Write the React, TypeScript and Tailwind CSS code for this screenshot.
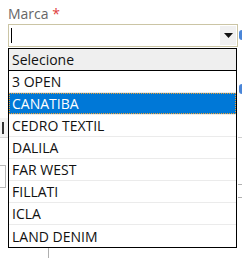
import React from "react";

const items = ["3 OPEN", "CANATIBA", "CEDRO TEXTIL", "DALILA", "FAR WEST", "FILLATI", "ICLA", "LAND DENIM"];

function Row({ label, selected, last }: { label: string; selected?: boolean; last?: boolean }) {
  if (selected) {
    return (
      <div className="h-[22px] border-b border-[#ebebeb] flex">
        <div className="flex-1 bg-[#0078d7] text-white border border-dotted border-[#f0a030] flex items-center pl-[2px]">
          {label}
        </div>
      </div>
    );
  }
  return (
    <div className={`h-[22px] flex items-center pl-[3px] ${last ? "" : "border-b border-[#ebebeb]"}`}>
      {label}
    </div>
  );
}

export default function App() {
  return (
    <div
      className="w-[242px] h-[258px] overflow-hidden bg-white flex"
      style={{ fontFamily: '"Open Sans", "Noto Sans", "DejaVu Sans", sans-serif' }}
    >
      {/* left gutter: fragments of the page behind the list */}
      <div className="w-[8px] shrink-0 flex flex-col">
        <div className="mt-[118px] h-[20px] border-b border-[#d8d8d8] bg-[#f4f4f4] flex items-center pl-[2px]">
          <div className="w-[2px] h-[12px] bg-[#333]" />
        </div>
        <div className="mt-[27px] w-[6px] h-[23px] border border-l-0 border-[#b8b8b8]" />
      </div>

      {/* field */}
      <div className="w-[230px] shrink-0 flex flex-col">
        <div className="pt-[4px] text-[14px] leading-[19px] text-[#666]">
          Marca <span className="text-[#e03c3c]">*</span>
        </div>

        <div className="mt-[1px] h-[23px] border border-[#cbc5a5] bg-white flex items-center">
          <div className="ml-[2px] w-[1px] h-[15px] bg-black" />
          <div className="ml-auto mr-[1px] w-[16px] h-[19px] bg-[#f0f0f0] flex items-center justify-center">
            <svg width="9" height="5" viewBox="0 0 9 5">
              <path d="M0 0H9L4.5 5Z" fill="#111" />
            </svg>
          </div>
        </div>

        <div className="mt-[1px] w-[229px] border border-black bg-white text-[14px] text-[#111]">
          <div className="h-[22px] bg-[#efefef] border-b border-black flex items-center pl-[3px]">Selecione</div>
          {items.map((it, i) => (
            <Row key={it} label={it} selected={it === "CANATIBA"} last={i === items.length - 1} />
          ))}
        </div>

        <div className="ml-[40px] w-[1px] h-[10px] bg-[#b0b0b0]" />
      </div>

      {/* right gutter */}
      <div className="flex-1 flex flex-col items-end">
        <div className="mt-[30px] w-[3px] h-[10px] rounded-l-full bg-[#4a86d8]" />
        <div className="mt-[44px] w-[3px] h-[10px] rounded-l-full bg-[#4a86d8]" />
        <div className="mt-[43px] w-full h-[1px] bg-[#d0d0d0]" />
        <div className="mt-[46px] w-full h-[14px] border-y border-[#b0b0b0]" />
      </div>
    </div>
  );
}
